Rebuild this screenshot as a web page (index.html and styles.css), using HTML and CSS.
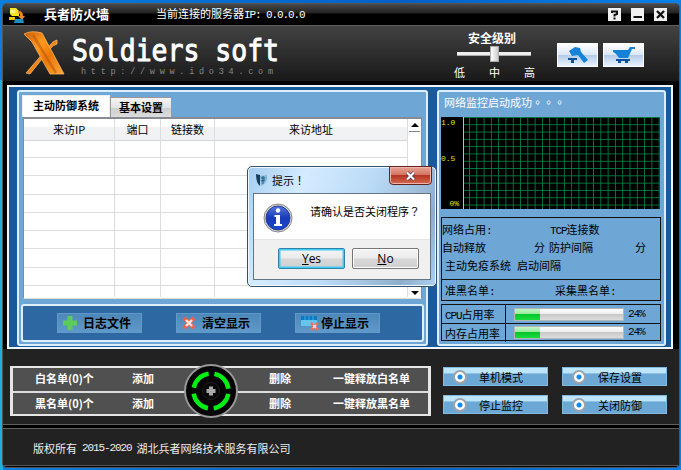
FILE: index.html
```html
<!DOCTYPE html>
<html lang="zh-CN">
<head>
<meta charset="utf-8">
<title>兵者防火墙</title>
<link rel="stylesheet" href="styles.css">
</head>
<body>
<div class="window">
  <div class="titlebar">
    <svg class="app-icon" width="17" height="17" viewBox="0 0 17 17"><path d="M1 1h6l3 3v5H3l-2-2z" fill="#f8e71c"/><path d="M1 3h5v3H1z" fill="#fff58a"/><path d="M0 10h6v3H0z" fill="#f4c400"/><path d="M9 4c4 0 5 2 5 5h2l-3 4-4-4h2c0-2 0-3-2-3z" fill="#e8892b"/><path d="M6 12h8l1 4H5z" fill="#1c8fc4"/></svg>
    <span class="app-name">兵者防火墙</span>
    <span class="server">当前连接的服务器<b class="mono">IP: 0.0.0.0</b></span>
    <div class="controls">
      <svg width="13" height="13" viewBox="0 0 13 13"><path class="key" d="M0 0h13v13H0z"/><path d="M4 5V3.500h5V6L6.500 7v1.500M6.500 9.500v2" fill="none" stroke="#111" stroke-width="2"/></svg>
      <svg width="13" height="13" viewBox="0 0 13 13"><path class="key" d="M0 0h13v13H0z"/><path d="M2.500 9h8.500" stroke="#111" stroke-width="2"/></svg>
      <svg width="13" height="13" viewBox="0 0 13 13"><path class="key" d="M0 0h13v13H0z"/><path d="M3 3l7 7M10 3l-7 7" stroke="#111" stroke-width="2.300"/></svg>
    </div>
  </div>

  <div class="header">
    <svg class="logo" width="44" height="46" viewBox="0 0 44 46">
      <defs><linearGradient id="og" x1="0" y1="0" x2="1" y2="1"><stop offset="0" stop-color="#c85a08"/><stop offset=".35" stop-color="#ff9a20"/><stop offset=".6" stop-color="#e87808"/><stop offset="1" stop-color="#ffa63a"/></linearGradient></defs>
      <path d="M34 9q-4 1-6 4L3 42l4 1 20-25q3-4 7-5z" fill="#ef8414" stroke="#ffc078" stroke-width=".7"/>
      <path d="M1 3q7-4 18-1l22 41H27L9 11Q5 7 1 3z" fill="url(#og)" stroke="#ffb25c" stroke-width=".8"/>
      <path d="M10 4l23 38" stroke="#b94f04" stroke-width="2.500" opacity=".5"/>
    </svg>
    <svg class="wordmark" width="240" height="53" viewBox="0 0 240 53">
      <text class="brand" x="1" y="35" textLength="207" lengthAdjust="spacingAndGlyphs">Soldiers soft</text>
      <text class="url" x="10" y="48" textLength="192">http://www.ido34.com</text>
    </svg>
    <div class="level">
      <div class="level-title">安全级别</div>
      <div class="track"><i></i></div>
      <div class="marks"><span>低</span><span>中</span><span>高</span></div>
    </div>
    <div class="tools">
      <div class="tool"><svg width="22" height="18" viewBox="0 0 22 18"><path d="M2 5l6-4 5 1 1 4 7 8-4 3-6-8-6 1z" fill="#1482d8"/><path d="M1 12h9v2H7v3H4v-3H1z" fill="#0a50a0"/></svg></div>
      <div class="tool"><svg width="24" height="18" viewBox="0 0 24 18"><path d="M1 4h15l2-3h5v2h-3l-4 9H7Q4 7 1 6z" fill="#1482d8"/><path d="M4 13h14v2H4zM6 15h3v2H6zM13 15h3v2h-3z" fill="#0a50a0"/></svg></div>
    </div>
  </div>

  <div class="main">
    <div class="frame">
      <div class="panel left">
        <div class="tabs"><div class="tab active">主动防御系统</div><div class="tab">基本设置</div></div>
        <div class="table">
          <div class="grid">
            <div class="col"><span>来访IP</span></div>
            <div class="col"><span>端口</span></div>
            <div class="col"><span>链接数</span></div>
            <div class="col"><span>来访地址</span></div>
          </div>
          <div class="scroll"><i class="up"></i><i class="down"></i></div>
        </div>
        <div class="toolbar">
          <div class="action"><svg width="16" height="16" viewBox="0 0 16 16"><path d="M5.500 1h5v4.500H15v5h-4.500V15h-5v-4.500H1v-5h4.500z" fill="#5ccc58"/></svg><span>日志文件</span></div>
          <div class="action"><svg width="16" height="16" viewBox="0 0 16 16"><path d="M3 3l10 10M13 3L3 13" stroke="#f0604e" stroke-width="4"/><path d="M5 5l6 6M11 5l-6 6" stroke="#ffe5df" stroke-width="2.400"/></svg><span>清空显示</span></div>
          <div class="action wide"><svg width="18" height="16" viewBox="0 0 18 16"><path d="M0 2h16v9H0z" fill="#63c3ec"/><path d="M0 1h16v4H0z" fill="#087bc8"/><path d="M4 1v10M8 1v10M12 1v10" stroke="#7bc6ea" stroke-width=".6"/><path d="M10 8l7 7M17 8l-7 7" stroke="#f36a57" stroke-width="2.500"/><path d="M12 10l3 3M15 10l-3 3" stroke="#ffe5df" stroke-width="1.500"/></svg><span>停止显示</span></div>
        </div>
      </div>

      <div class="panel right">
        <div class="status">网络监控启动成功<span class="wide-punct" lang="zh-TW">。。。</span></div>
        <div class="chart"><div class="axis"><span>1.0</span><span>0.5</span><span class="zero">0%</span></div><div class="plot"></div></div>
        <div class="info">
          <div class="line"><span class="c1">网络占用<b class="mono">:</b></span><span class="c2 tcp"><b class="mono">TCP</b>连接数</span></div>
          <div class="line"><span class="c1">自动释放</span><span class="unit">分</span><span class="guard">防护间隔</span><span>分</span></div>
          <div class="line third"><span>主动免疫系统</span><span>启动间隔</span></div>
          <div class="line lists-row"><span class="c1">准黑名单<b class="mono">:</b></span><span>采集黑名单<b class="mono">:</b></span></div>
        </div>
        <div class="usage">
          <div class="use"><span class="label"><b class="mono">CPU</b>占用率</span><div class="bar"><i></i></div><b class="mono">24%</b></div>
          <div class="use"><span class="label">内存占用率</span><div class="bar"><i></i></div><b class="mono">24%</b></div>
        </div>
      </div>
    </div>
  </div>

  <div class="bottom">
    <div class="lists">
      <div class="list"><span>白名单(0)个</span><span>添加</span><span>删除</span><span>一键释放白名单</span></div>
      <div class="list"><span>黑名单(0)个</span><span>添加</span><span>删除</span><span>一键释放黑名单</span></div>
      <svg class="target" width="56" height="56" viewBox="0 0 56 56">
        <circle cx="28" cy="28" r="26" fill="#050505" stroke="#999" stroke-width="2"/>
        <circle cx="28" cy="28" r="17.500" fill="none" stroke="#00ef12" stroke-width="4.500" stroke-dasharray="21.500 5.989" stroke-dashoffset="-2.990"/>
        <circle cx="28" cy="28" r="8.500" fill="#080808" stroke="#1e1e1e"/>
        <path d="M26 23.500h4V26h2.500v4H30v2.500h-4V30h-2.500v-4H26z" fill="#aaa"/>
      </svg>
    </div>
    <div class="modes">
      <div class="mode"><i></i><span>单机模式</span></div><div class="mode"><i></i><span>保存设置</span></div>
      <div class="mode"><i></i><span>停止监控</span></div><div class="mode"><i></i><span>关闭防御</span></div>
    </div>
  </div>
  <div class="divider"></div>
  <div class="footer"><span>版权所有</span><b class="mono">2015-2020</b><span>湖北兵者网络技术服务有限公司</span></div>
</div>

<div class="dialog">
  <div class="dialog-bar">
    <svg width="13" height="14" viewBox="0 0 13 14"><path d="M1 1l4 1v11Q1 10 1 1z" fill="#173f5c"/><path d="M5 3l7-1q1 8-6 11z" fill="#7db7d6"/><path d="M6 5l4 0M6 8l4-1M8 3v8" stroke="#285b7b" fill="none"/></svg>
    <span class="dialog-title">提示<span class="wide-punct" lang="zh-TW">！</span></span>
    <div class="close"><svg width="11" height="10" viewBox="0 0 11 10"><path d="M2 1.500l7 7M9 1.500l-7 7" stroke="#57304a" stroke-width="3.600"/><path d="M2 1.500l7 7M9 1.500l-7 7" stroke="#fff" stroke-width="2.200"/></svg></div>
  </div>
  <div class="client">
    <div class="message">
      <svg width="30" height="30" viewBox="0 0 30 30"><defs><linearGradient id="ib" x1="0" y1="0" x2="0" y2="1"><stop offset="0" stop-color="#5878d8"/><stop offset=".5" stop-color="#173bb8"/><stop offset="1" stop-color="#1d49d0"/></linearGradient></defs><circle cx="15" cy="15" r="14" fill="#d6d6d6" stroke="#888"/><circle cx="15" cy="15" r="12" fill="url(#ib)" stroke="#24389a"/><circle cx="15" cy="7.500" r="2.200" fill="#fff"/><path d="M11.500 12h5.500v9h2v2h-8v-2h2v-7h-1.500z" fill="#fff"/></svg>
      <span>请确认是否关闭程序<span class="wide-punct" lang="zh-TW">？</span></span>
    </div>
    <div class="buttons"><div class="button primary"><u>Y</u>es</div><div class="button"><u>N</u>o</div></div>
  </div>
</div>
</body>
</html>
```
FILE: styles.css
```css
* { box-sizing: border-box; }
body {
  margin: 0; width: 681px; height: 470px; overflow: hidden; position: relative;
  background: linear-gradient(90deg, #1fb0d8 0, #1fb0d8 3px, transparent 3px) 0 80px no-repeat, linear-gradient(90deg, #0b7ddd, #0560c6 60%, #0a80e8);
  font: 11px/14px "Noto Sans CJK SC", sans-serif; color: #000;
}
.mono { font: 11px/11px "Liberation Mono", monospace; letter-spacing: -1.1px; white-space: pre; }
.wide-punct { font-family: "Noto Sans CJK TC", sans-serif; }
span { white-space: nowrap; }
.window { margin: 3px 1px 0 2px; height: 465px; background: #000; border: 1px solid #555; border-radius: 5px; overflow: hidden; }

.titlebar { height: 22px; display: flex; align-items: center; padding-left: 6px; border-bottom: 1px solid #606060; background: linear-gradient(#4a4a4a, #222 42%, #000 48%); color: #fff; }
.app-icon { width: 17px; margin-top: 1px; }
.app-name { font-size: 13px; font-weight: bold; margin: 0 47px 2px 18px; width: 65px; }
.server { margin-bottom: 2px; }
.controls { display: flex; gap: 10px; margin-left: auto; padding-right: 12px; }
.key { fill: #f0f0f0; }

.header { height: 55px; display: flex; background: linear-gradient(#424242, #191919); color: #fff; }
.logo { margin: 5px 0 0 20px; }
.wordmark { margin-left: 4px; }
.brand { font: 31px "DejaVu Sans Mono", monospace; fill: #fff; stroke: #fff; stroke-width: 1px; }
.url { font: 8.500px "Liberation Mono", monospace; fill: #888; }
.level { width: 84px; margin: 4px 0 0 144px; padding-left: 1px; }
.level-title { font-size: 12px; font-weight: bold; text-align: center; line-height: 16px; width: 72px; }
.track { width: 74px; height: 4px; margin: 6px 0 0 1px; background: #eee; border-bottom: 1px solid #aaa; display: flex; justify-content: center; align-items: center; }
.track i { width: 9px; height: 16px; flex: none; border: 1px solid #aaa; background: linear-gradient(90deg, #fff, #ccc); }
.marks { display: flex; justify-content: space-between; width: 81px; margin: 8px 0 0 -2px; line-height: 16px; }
.tools { display: flex; gap: 5px; margin: 17px 0 0 18px; }
.tool { width: 41px; height: 24px; display: flex; align-items: center; justify-content: center; border: 1px solid #fff; background: linear-gradient(#fff, #dce7f7 48%, #b5cbea 52%, #eaf3ff); }

.main { height: 268px; padding: 4px 0 0 4px; }
.frame { width: 666px; height: 264px; border: 2px solid #eef6ff; background: #1a5a9b; padding: 3px 5px 1px 8px; display: flex; gap: 9px; }
.panel { border: 2px solid #dcefff; background: #6ea6d5; border-radius: 3px; }
.left { width: 411px; padding: 3px 2px 0; }
.tabs { display: flex; align-items: flex-end; height: 22px; margin-left: 1px; }
.tab { font-weight: bold; text-align: center; width: 62px; height: 20px; line-height: 18px; border: 1px solid #999; border-bottom: 0; background: linear-gradient(#f4f4f4, #e4e4e4 50%, #cdcdcd 52%, #ddd); }
.tab.active { width: 88px; height: 22px; line-height: 19px; background: #fff; border-color: #eee; }
.table { height: 182px; margin: 0 2px; display: flex; border: 1px solid #888b96; border-top-width: 2px; border-bottom-color: #ddd; background: #fff; }
.grid { width: 384px; display: grid; grid-template-columns: 91px 46px 54px 193px; background: linear-gradient(#fff, #fff 35%, #f1f2f4 40%, #f1f2f4) 0 0/100% 21px no-repeat, repeating-linear-gradient(transparent 0 17.250px, #dedede 17.250px 18.250px) 0 21px no-repeat; border-bottom: 1px solid #fff; }
.col { border-right: 1px solid #dcdcdc; text-align: center; }
.col span { display: block; border-bottom: 1px solid #d5d5d5; height: 22px; line-height: 21px; }
.scroll { flex: 1; display: flex; flex-direction: column; justify-content: space-between; align-items: center; padding: 4px 1px 3px; }
.up { border: 4px solid transparent; border-top: 0; border-bottom: 4px solid #000; position: relative; }
.up::after { content: ""; position: absolute; left: -6px; top: 8px; width: 11px; height: 1px; background: #888; }
.down { border: 4px solid transparent; border-bottom: 0; border-top: 4px solid #000; }
.toolbar { height: 38px; margin-top: 5px; padding: 7px 0 0 34px; display: flex; gap: 34px; border: 2px solid #dcefff; border-radius: 3px; background: #2d68a2; }
.action { width: 85px; height: 20px; display: flex; align-items: center; padding-left: 4px; gap: 5px; border: 1px solid #6199c9; background: linear-gradient(#4d88ba, #5e99c9); font-size: 12px; font-weight: bold; }
.action.wide { gap: 2px; padding-left: 5px; }

.right { width: 229px; padding: 2px 4px 0 2px; }
.status { height: 23px; line-height: 16px; padding-left: 3px; color: #fff; }
.chart { height: 92px; width: 219px; display: flex; background: #000; }
.axis { width: 22px; display: flex; flex-direction: column; justify-content: space-between; color: #e4e600; font: 8px/10px "Liberation Mono", monospace; padding: 1px 0 0; }
.zero { text-align: right; padding-right: 4px; }
.axis span:nth-child(2) { margin-bottom: 9px; }
.plot { flex: 1; border-left: 1px solid #d6d600; background: linear-gradient(90deg, #007a40 1.200px, transparent 1.200px) 5px 0/7.300px 7.300px, linear-gradient(#007a40 1.200px, transparent 1.200px) 0 0/7.300px 7.300px; }
.info { width: 220px; height: 84px; margin-top: 8px; border: 1px solid #111; padding-top: 2px; }
.line { display: flex; height: 18px; line-height: 17px; align-items: center; }
.c1 { width: 108px; }
.unit { width: 15px; margin-left: -16px; }
.guard { width: 86px; }
.third { padding-left: 3px; gap: 6px; }
.lists-row { height: 22px; margin-top: 5px; padding-left: 3px; border-top: 1px solid #111; }
.lists-row .c1 { width: 110px; }
.usage { width: 220px; height: 37px; margin-top: 3px; border: 1px solid #111; }
.use { height: 18px; display: flex; align-items: center; }
.use + .use { border-top: 1px solid #111; }
.label { width: 64px; height: 18px; line-height: 18px; padding-left: 3px; border-right: 1px solid #111; }
.bar { width: 110px; height: 13px; margin: 0 4px 0 8px; border: 1px solid #b5b5b5; background: linear-gradient(#fff, #eee 42%, #c8c8c8 48%, #ddd); display: flex; }
.bar i { width: 25px; background: linear-gradient(#c4f5c8, #9bea9f 42%, #05c52a 48%, #18dc3c); }

.bottom { height: 75px; background: #222; display: flex; padding-left: 7px; }
.lists { position: relative; width: 421px; height: 50px; margin-top: 17px; border: 2px solid #e6e6e6; border-width: 2px 3px; background: #505050; color: #fff; font-weight: bold; }
.list { height: 23px; display: grid; grid-template-columns: 97px 137px 64px auto; padding-left: 22px; line-height: 21px; }
.list + .list { border-top: 2px solid #ddd; }
.target { position: absolute; left: 170px; top: -5px; }
.modes { margin: 18px 0 0 12px; height: 47px; display: grid; grid-template-columns: 105px 105px; grid-template-rows: 19px 19px; gap: 9px 14px; }
.mode { display: flex; align-items: center; padding-left: 9px; border: 1px solid #82b9df; background: linear-gradient(#bde5fb 0 30%, #6ba8d6 34%); }
.mode i { width: 14px; height: 14px; border: 2px solid #9ca3aa; border-radius: 50%; background: radial-gradient(circle, #118af0 0 2px, #fff 3px); }
.mode span { margin-left: 12px; }
.divider { height: 5px; background: #000; border: solid #606060; border-width: 1px 0; }
.footer { height: 37px; display: flex; align-items: center; padding: 2px 0 0 30px; gap: 5px; background: #222; border-bottom: 1px solid #555; color: #eee; }

.dialog { position: absolute; left: 247px; top: 166px; width: 190px; height: 121px; border: 1px solid #35506b; border-radius: 5px; box-shadow: inset 0 0 0 1px #f0f9ff; background: linear-gradient(115deg, #a5cdf0, #d5ebff 25%, #b9daf6 55%, #8faec9 85%, #abd1f3); }
.dialog-bar { height: 26px; display: flex; align-items: center; padding-left: 7px; }
.dialog-title { margin-left: 4px; }
.close { margin: -1px 4px 0 auto; align-self: flex-start; width: 43px; height: 19px; border: 1px solid #602522; border-radius: 0 0 4px 4px; display: flex; align-items: center; justify-content: center; background: linear-gradient(#e8a394, #d37663 45%, #b53524 50%, #d46a4d); box-shadow: inset 0 0 0 1px #efb6a9; }
.client { width: 178px; height: 87px; margin-left: 5px; border: 1px solid #637486; background: #f0f0f0; }
.message { height: 45px; padding: 3px 0 0 9px; display: flex; align-items: center; background: #fff; }
.message > span { margin: -14px 0 0 17px; }
.buttons { height: 40px; padding: 8px 0 0 24px; display: flex; gap: 7px; border-top: 1px solid #e4e4e4; }
.button { width: 67px; height: 21px; border: 1px solid #777; border-radius: 2px; text-align: center; font: 12px/20px "Open Sans", sans-serif; background: linear-gradient(#f4f4f4, #ebebeb 48%, #d8d8d8 52%, #d0d0d0); box-shadow: inset 0 0 0 1px #fff; }
.primary { border-color: #3082a8; box-shadow: inset 0 0 0 1.500px #40ccf5; }
```
